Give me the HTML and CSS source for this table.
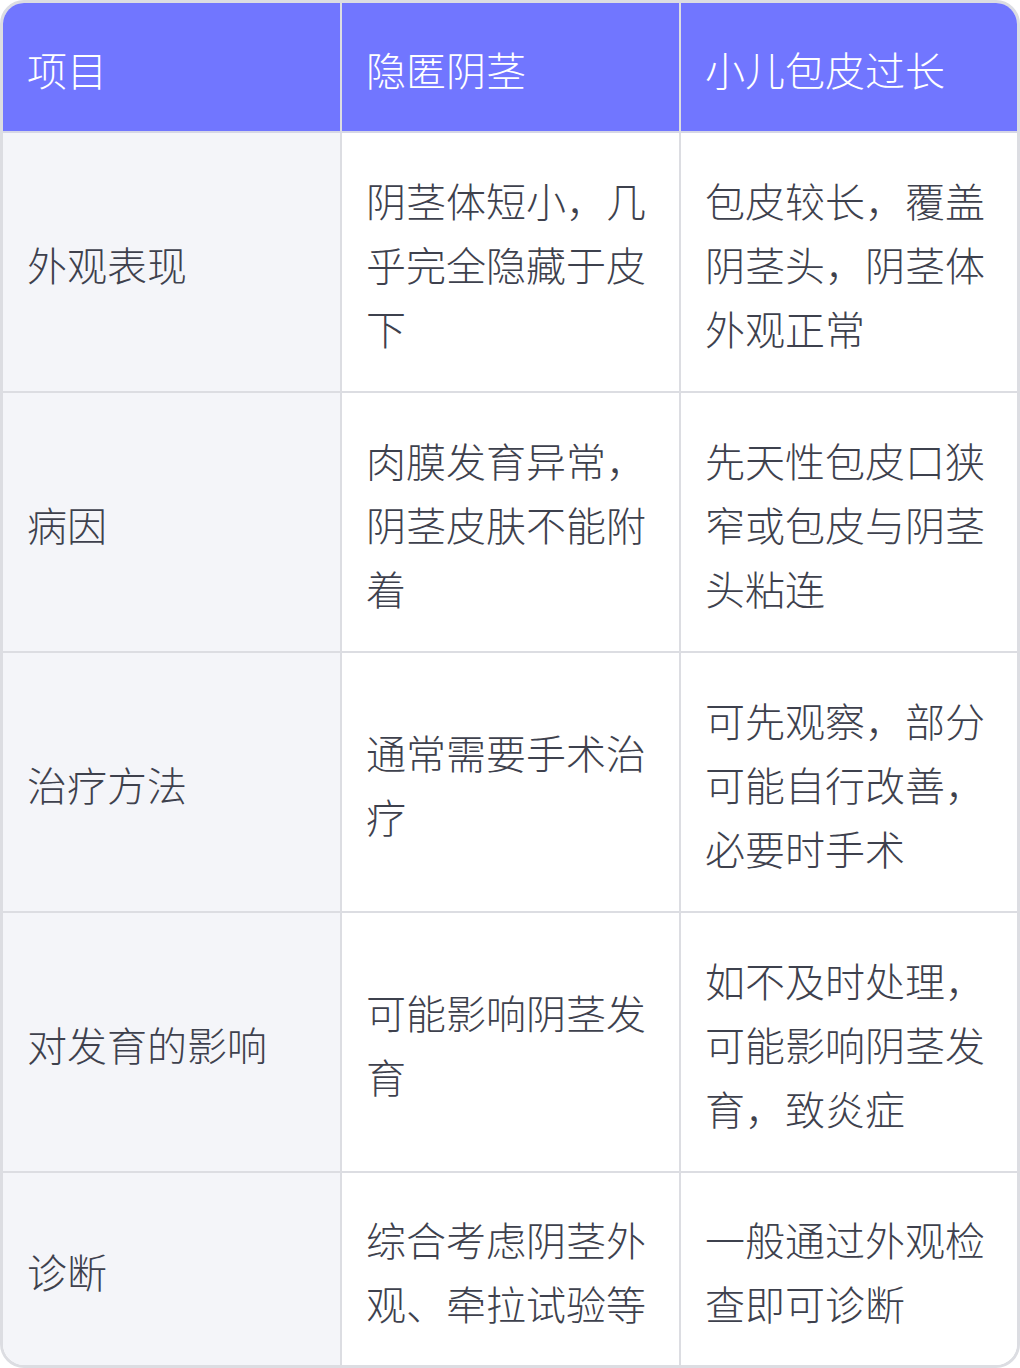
FILE: index.html
```html
<!DOCTYPE html>
<html lang="zh-CN">
<head>
<meta charset="utf-8">
<link rel="stylesheet" href="styles.css">
</head>
<body>
<div class="wrap">
<table class="cmp">
  <thead>
    <tr><th>项目</th><th>隐匿阴茎</th><th>小儿包皮过长</th></tr>
  </thead>
  <tbody>
    <tr class="tall"><td class="label">外观表现</td><td>阴茎体短小，几乎完全隐藏于皮下</td><td>包皮较长，覆盖阴茎头，阴茎体外观正常</td></tr>
    <tr class="tall"><td class="label">病因</td><td>肉膜发育异常，阴茎皮肤不能附着</td><td>先天性包皮口狭窄或包皮与阴茎头粘连</td></tr>
    <tr class="tall"><td class="label">治疗方法</td><td>通常需要手术治疗</td><td>可先观察，部分可能自行改善，必要时手术</td></tr>
    <tr class="tall"><td class="label">对发育的影响</td><td>可能影响阴茎发育</td><td>如不及时处理，可能影响阴茎发育，致炎症</td></tr>
    <tr><td class="label">诊断</td><td>综合考虑阴茎外观、牵拉试验等</td><td>一般通过外观检查即可诊断</td></tr>
  </tbody>
</table>
</div>
</body>
</html>
```
FILE: styles.css
```css
html, body {
  margin: 0;
  padding: 0;
  background: #ffffff;
}
.wrap {
  width: 1020px;
  height: 1368px;
  box-sizing: border-box;
  border: 3px solid #dcdde2;
  border-radius: 24px;
  overflow: hidden;
}
.cmp {
  width: 1014px;
  border-collapse: separate;
  border-spacing: 0;
  table-layout: fixed;
  font-family: "Noto Sans CJK SC", "Noto Sans", sans-serif;
  font-weight: 300;
  font-size: 40px;
  line-height: 64px;
  color: #3e414d;
}
.cmp th, .cmp td {
  padding: 34px 24px 30px;
  text-align: left;
  vertical-align: middle;
  border-right: 2px solid #dcdde2;
  border-bottom: 2px solid #dcdde2;
  width: 289px;
}
.cmp th:last-child, .cmp td:last-child {
  border-right: none;
  width: 288px;
}
.cmp tbody tr:last-child td {
  border-bottom: none;
}
.cmp th {
  background: #7176ff;
  color: #ffffff;
  font-weight: 300;
  height: 64px;
  border-bottom-color: #d6d7e6;
}
.cmp td {
  background: #ffffff;
}
.cmp td.label {
  background: #f4f5f9;
}
.cmp tr.tall td {
  height: 194px;
}
```
